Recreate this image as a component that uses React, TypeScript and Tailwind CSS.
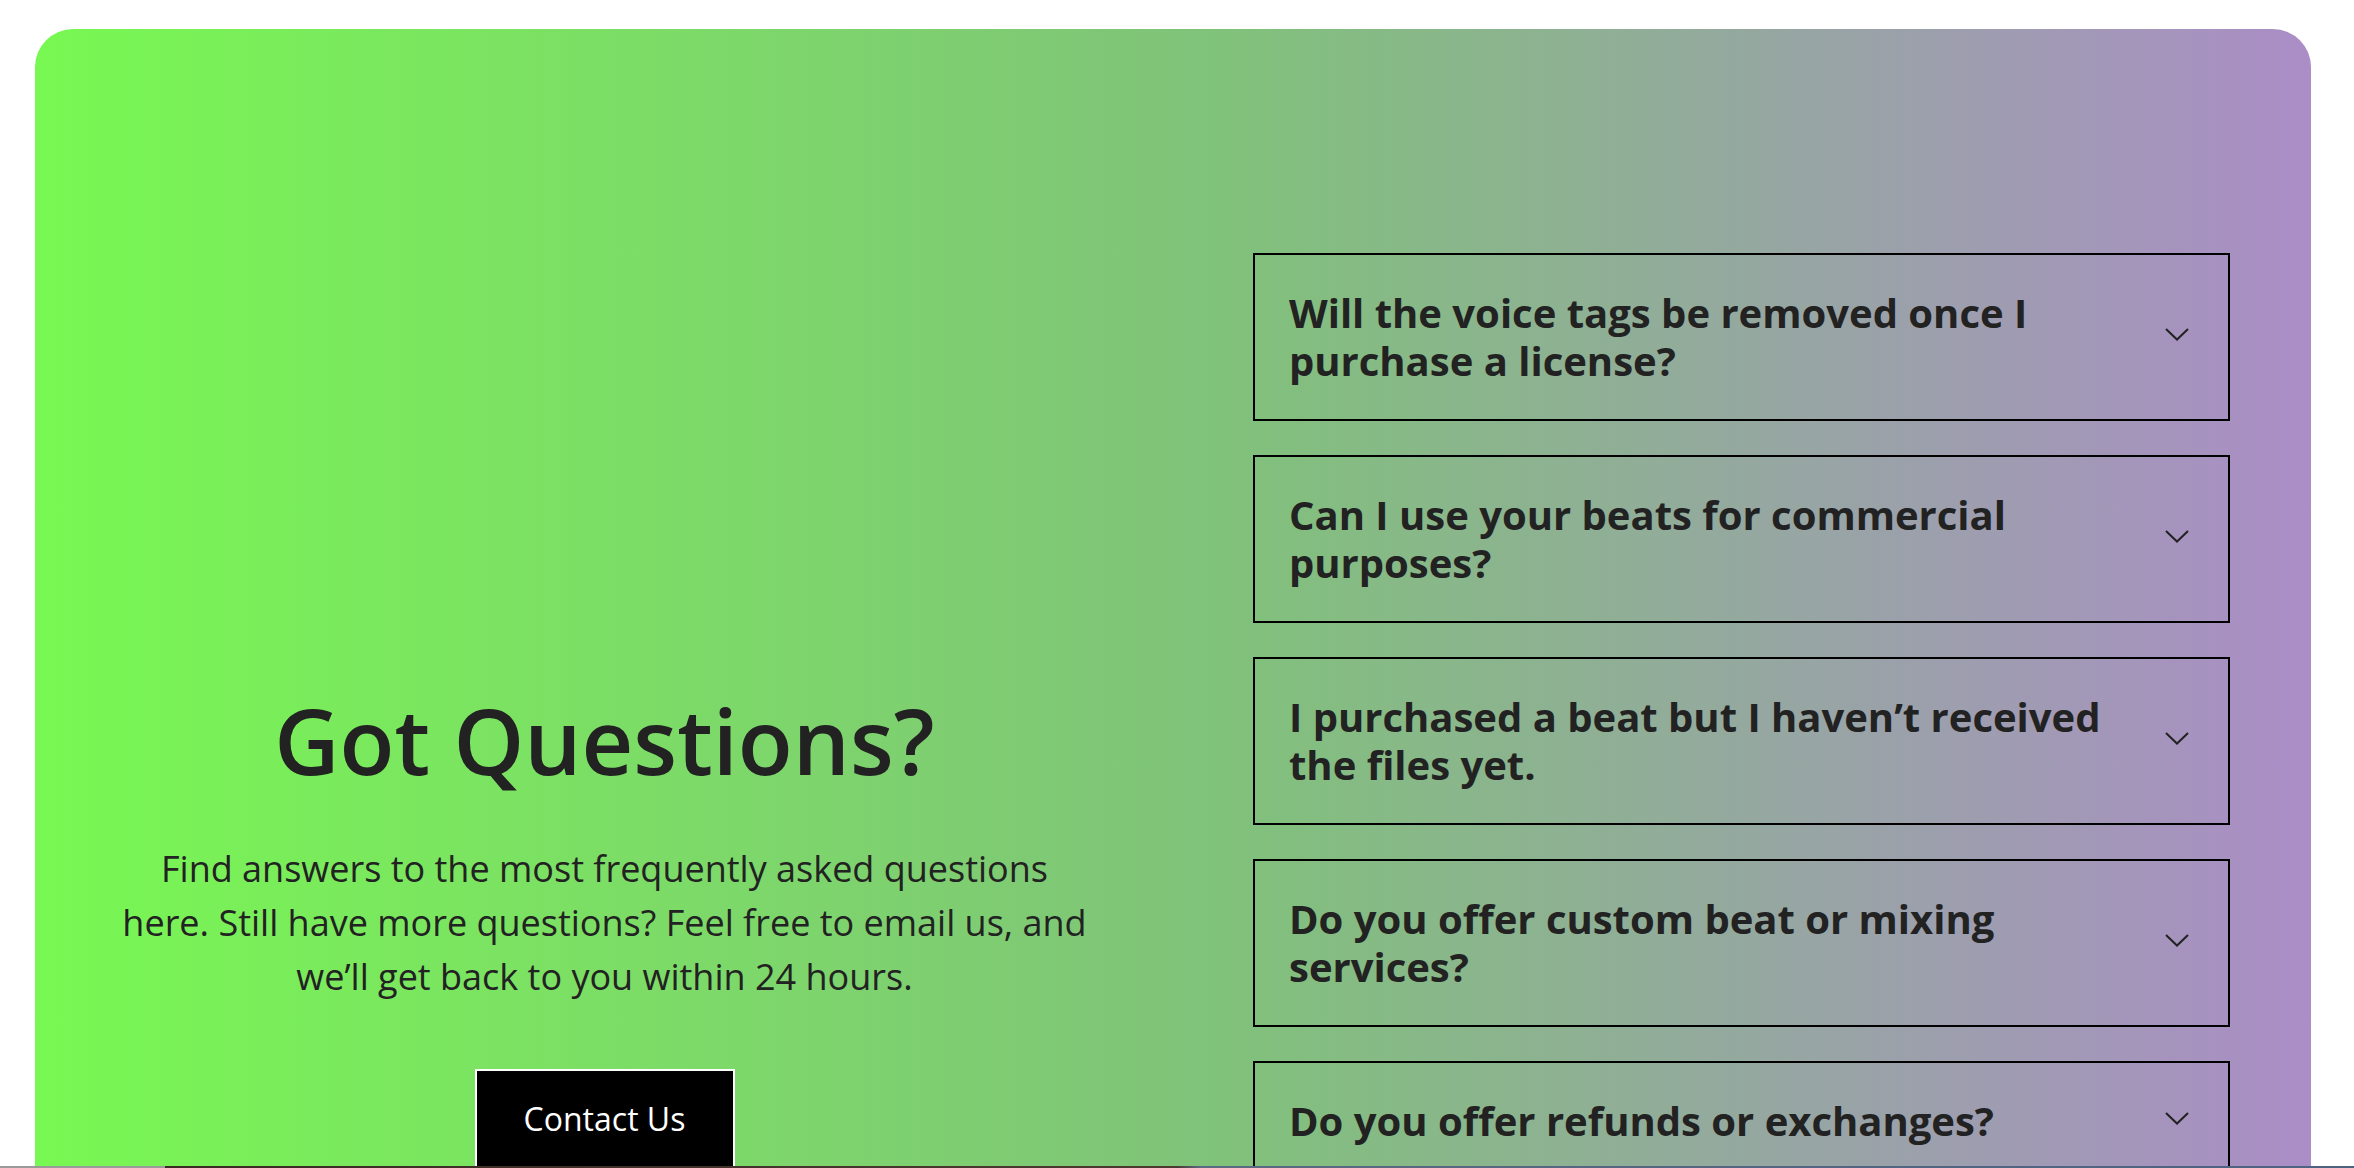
const FAQS = [
  "Will the voice tags be removed once I purchase a license?",
  "Can I use your beats for commercial purposes?",
  "I purchased a beat but I haven’t received the files yet.",
  "Do you offer custom beat or mixing services?",
  "Do you offer refunds or exchanges?",
];

function Chevron() {
  return (
    <svg width="24" height="13" viewBox="0 0 24 13" fill="none" className="mb-[5px] shrink-0">
      <path d="M1 1L12 11.5L23 1" stroke="#222" strokeWidth="2" />
    </svg>
  );
}

function FaqItem({ question }: { question: string }) {
  return (
    <button className="flex w-full items-center gap-[40px] border-2 border-black py-[34px] pl-[34px] pr-[39px] text-left">
      <span className="flex-1 text-[40px] font-bold leading-[48px] text-[#222]">{question}</span>
      <Chevron />
    </button>
  );
}

export default function App() {
  return (
    <div className="h-[1168px] w-[2354px] overflow-hidden bg-white pt-[29px] font-['Open_Sans',sans-serif]">
      <section className="ml-[35px] flex h-[1137px] w-[2276px] gap-[160px] overflow-hidden rounded-t-[38px] bg-[linear-gradient(90deg,#78f852_0%,#80c27a_52%,#ab8dc7_100%)] px-[81px]">
        <div className="flex w-[977px] shrink-0 flex-col items-center pt-[656px] text-center text-[#222]">
          <h2 className="text-[90px] font-semibold leading-[110px]">Got Questions?</h2>
          <p className="mt-[47px] text-[36px] leading-[54px]">
            Find answers to the most frequently asked questions here. Still have more questions? Feel free to email us, and
            we’ll get back to you within 24 hours.
          </p>
          <a className="mt-[65px] flex h-[100px] w-[260px] shrink-0 items-center justify-center border-2 border-white bg-black text-[32px] text-white">
            Contact Us
          </a>
        </div>
        <div className="flex w-[977px] shrink-0 flex-col gap-[34px] pt-[224px]">
          {FAQS.map((q) => (
            <FaqItem key={q} question={q} />
          ))}
        </div>
      </section>
      <div className="h-[2px] w-full bg-[linear-gradient(90deg,#9a9a9a_0%,#9a9a9a_7%,#3a2a22_7%,#4a3a30_50%,#5a6a80_51%,#4e6282_100%)]" />
    </div>
  );
}
